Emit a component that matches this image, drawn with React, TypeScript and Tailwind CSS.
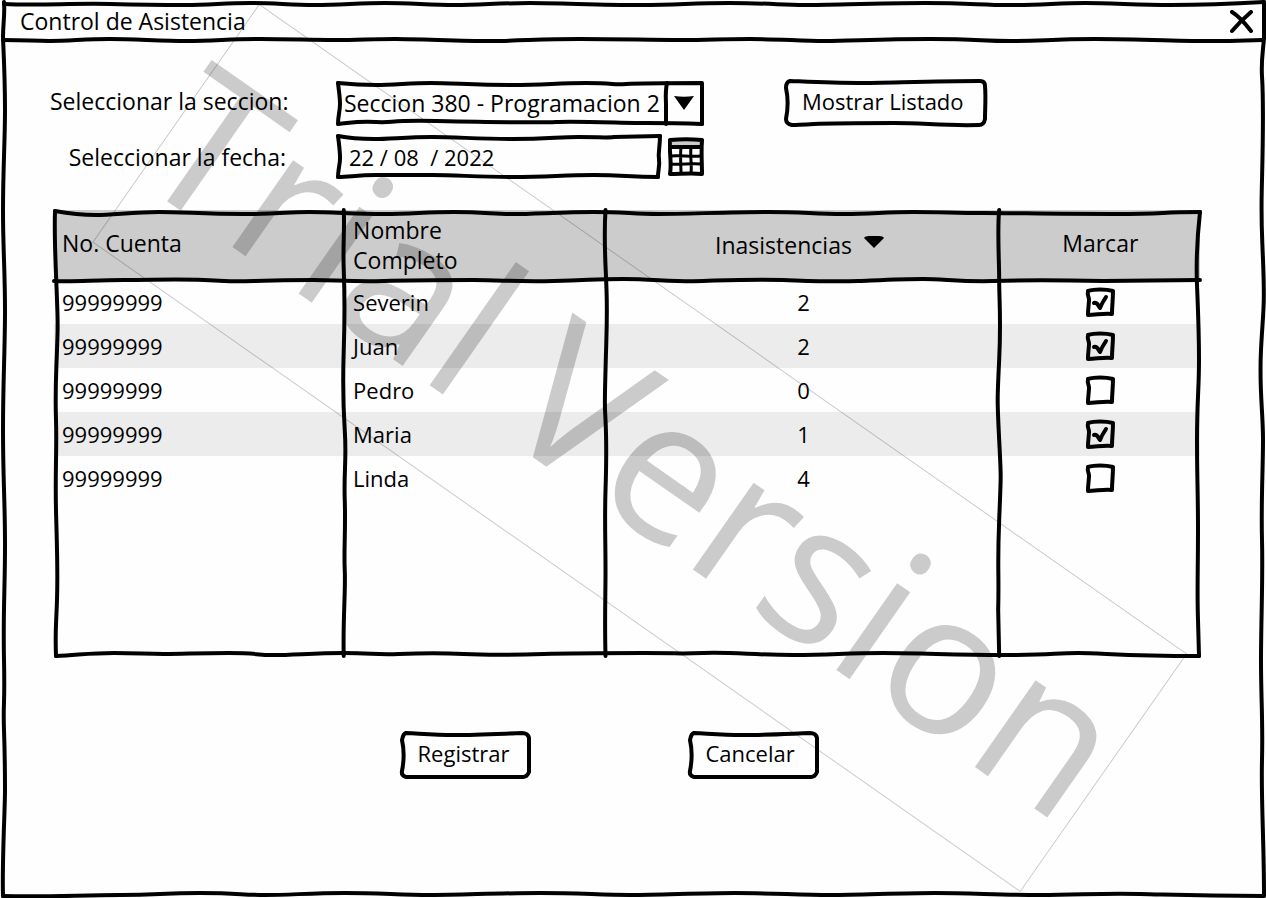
import { useState, type ReactNode } from "react";

const students = [
  { account: "99999999", name: "Severin", absences: 2, marked: true },
  { account: "99999999", name: "Juan", absences: 2, marked: true },
  { account: "99999999", name: "Pedro", absences: 0, marked: false },
  { account: "99999999", name: "Maria", absences: 1, marked: true },
  { account: "99999999", name: "Linda", absences: 4, marked: false },
];

/** Hand-drawn strokes laid over the box that contains them. */
function Sketch({ box, paths, width = 4 }: { box: string; paths: string[]; width?: number }) {
  return (
    <svg
      aria-hidden="true"
      viewBox={box}
      preserveAspectRatio="none"
      className="pointer-events-none absolute inset-0 h-full w-full overflow-visible"
      fill="none"
      stroke="#000"
      strokeWidth={width}
      strokeLinecap="round"
      strokeLinejoin="round"
    >
      {paths.map((d) => (
        <path key={d} d={d} vectorEffect="non-scaling-stroke" />
      ))}
    </svg>
  );
}

const windowPaths = [
  "M4 4C40 6 70 3 110 4S160 5 185 5S225 3 250 3S290 5 315 5S360 3 385 3S430 5 455 5S500 3 530 3S600 5 640 5S690 3 730 3S780 5 805 5S880 3 925 3S980 5 1010 5S1060 3 1085 3S1140 5 1170 5S1230 4 1264 2",
  "M4 2C5 14 3 24 3 38C4 60 5 80 5 110S3 170 3 210S5 270 5 310S3 380 3 430S5 500 5 545S3 610 4 660S3 700 4 730S5 770 5 790S2 860 3 896",
  "M3 896C50 897 80 895 120 895S160 893 200 893S240 895 265 895S310 893 345 893S400 895 430 895S500 893 540 893S600 895 630 895S700 893 735 893S800 895 830 895S900 893 935 893S1000 895 1040 895S1100 893 1140 894S1200 896 1264 896",
  "M1264 2V38C1263 52 1261 60 1262 76S1263 140 1262 180S1261 210 1263 260S1263 310 1261 350S1263 410 1263 440S1261 500 1262 540S1261 620 1261 660S1263 720 1262 760S1264 840 1264 896",
];

const titleLine = [
  "M3 4C30 4 30 5 50 5S85 3 110 3S160 5 187 5S230 3 260 3S310 4 335 4S370 3 395 3S460 5 490 5S540 3 580 3S650 4 680 4S720 3 750 3S800 5 825 5S880 3 930 3S980 5 1012 5S1050 3 1095 3S1180 5 1212 5S1245 4 1263 4",
];

const fieldPaths = [
  "M2 2C12 4 22 5 38 5S70 3 95 3S140 5 175 5S220 3 240 3S270 4 275 3L321 2",
  "M321 2C321 14 319 18 320 25S319 36 319 43",
  "M2 43C14 43 20 41 40 41S70 41 95 41S140 43 175 43S225 41 255 41S290 43 319 43",
  "M2 2C3 10 4 17 4 24S2 35 2 43",
];

const tablePaths = [
  "M1 1C12 3 25 5 42 5S80 2 105 2S150 4 190 4S230 2 255 2S300 4 330 4S370 2 400 2S440 4 460 4S510 2 540 2S580 4 605 4S680 2 715 2S760 4 790 4S830 2 860 2S900 3 930 3S1000 4 1060 4S1100 2 1147 2",
  "M0 71C20 72 40 70 70 70S120 69 150 70S170 72 200 71S240 70 260 70S300 72 330 71S390 70 420 70S460 72 500 71S540 69 570 69S620 72 650 71S700 69 730 70S780 72 805 71S850 69 870 69S910 72 940 71S1000 70 1050 71L1147 70",
  "M1 1C0 30 2 60 3 90S4 110 3 140S1 180 2 210S1 260 2 300S4 360 3 390S1 420 2 446",
  "M1147 2C1145 20 1143 50 1144 75S1146 120 1146 150S1144 190 1144 230S1145 280 1145 320S1144 380 1145 410L1146 446",
  "M2 446C25 445 35 443 60 443S90 444 110 444S145 443 175 443S200 445 220 445S260 443 290 443S320 445 345 444S390 443 410 444S460 445 490 444S550 443 590 443S620 444 650 443S700 445 740 445S790 443 830 443S900 445 950 445S1000 443 1025 443S1070 446 1146 446",
  "M290 0C291 20 289 35 290 60S291 110 290 140S289 190 291 220S290 260 291 290S290 340 291 360S289 410 290 446",
  "M552 0C550 30 552 50 553 80S553 120 552 160S551 190 552 210S553 250 552 280S552 330 552 360S551 410 552 446",
  "M946 0C944 20 946 50 946 70S948 110 946 150S944 190 946 230S948 260 946 310S946 360 945 400L946 446",
];

const checkboxPaths = [
  "M2 3C8 1 20 1 27 3C27 12 26 17 26 26C18 25 10 27 2 27C2 20 3 16 3 12S1 8 2 3Z",
];

function SketchButton({ children, wide = false }: { children: ReactNode; wide?: boolean }) {
  return wide ? (
    <button type="button" className="relative h-12 w-[203px] pb-1 pl-[18px] text-left">
      <Sketch
        box="0 0 203 48"
        paths={[
          "M6 2C30 3 50 4 75 4S150 2 196 2Q201 2 201 7C202 18 201 30 201 40Q200 46 195 46C160 47 140 44 110 44S50 44 30 45S14 46 8 46Q2 45 2 40C4 30 4 18 2 9Q2 3 6 2Z",
        ]}
      />
      {children}
    </button>
  ) : (
    <button type="button" className="relative h-12 w-[131px] pb-1 pl-[18px] text-left">
      <Sketch
        box="0 0 131 48"
        paths={[
          "M6 2C25 3 35 4 55 4S95 3 122 2Q128 2 129 7V41Q127 46 123 46H6Q1 45 2 40C4 30 4 18 2 9Q3 3 6 2Z",
        ]}
      />
      {children}
    </button>
  );
}

function Watermark() {
  return (
    <svg
      viewBox="0 0 1266 898"
      className="pointer-events-none absolute inset-0 h-full w-full"
      fillOpacity="0.2"
    >
      <g transform="rotate(35)">
        <rect x="215" y="-145" width="1132" height="290" fill="none" stroke="#000" strokeOpacity="0.2" />
        <text y="69" fontSize="198">
          <tspan x="206">Trial</tspan>
          <tspan x="648">Version</tspan>
        </text>
      </g>
    </svg>
  );
}

export default function App() {
  const [rows, setRows] = useState(students);
  const toggle = (index: number) =>
    setRows(rows.map((row, i) => (i === index ? { ...row, marked: !row.marked } : row)));

  return (
    <main className="relative flex min-h-screen flex-col bg-[#fefefe] font-['Open_Sans','Noto_Sans',sans-serif] text-[22px] leading-[30px] text-black">
      <Sketch box="0 0 1266 898" paths={windowPaths} />

      <header className="relative flex h-11 items-center justify-between pr-3 pl-5">
        <h1 className="pb-0.5 text-[23px]">Control de Asistencia</h1>
        <button type="button" aria-label="Cerrar" className="size-6">
          <svg viewBox="0 0 24 24" className="size-6" fill="none" stroke="#000" strokeWidth="4" strokeLinecap="round">
            <path d="M2 2C7 5 14 12 21 21M21 2C14 8 8 14 2 21" />
          </svg>
        </button>
        <div className="absolute inset-x-0 bottom-0 h-2">
          <Sketch box="0 0 1266 8" paths={titleLine} />
        </div>
      </header>

      <form className="mt-[35px] flex items-start gap-20 pl-[50px]">
        <div className="grid grid-cols-[238px_368px] items-center gap-x-12 gap-y-2 pt-px">
          <label htmlFor="section" className="pb-1 text-right text-[23px] whitespace-nowrap">
            Seleccionar la seccion:
          </label>
          <div className="relative h-[46px]">
            <select id="section" className="h-full w-full appearance-none bg-transparent pl-2 text-[23px]">
              <option>Seccion 380 - Programacion 2</option>
            </select>
            <Sketch
              box="0 0 368 46"
              paths={[
                "M2 3C12 4 22 5 40 5S75 3 95 3S140 5 175 5S220 3 250 3S275 5 290 4S330 3 366 3V44",
                "M366 44C340 43 330 43 310 43S240 41 220 42S150 42 100 41S60 43 40 42S14 43 2 44C2 36 4 31 4 24S3 12 2 3",
                "M331 3C329 12 330 20 330 24V44",
              ]}
            />
            <svg aria-hidden="true" viewBox="0 0 20 14" className="pointer-events-none absolute top-4 right-[10px] h-[14px] w-5">
              <path d="M0 0C7 1 13 1 20 0L10 14Z" />
            </svg>
          </div>

          <label htmlFor="date" className="pr-0.5 text-right text-[23px] whitespace-nowrap">
            Seleccionar la fecha:
          </label>
          <div className="flex items-center justify-between">
            <div className="relative h-[46px] w-[326px]">
              <input
                id="date"
                type="text"
                defaultValue="22 / 08  / 2022"
                className="h-full w-full bg-transparent px-[13px] outline-none"
              />
              <Sketch box="0 0 323 46" paths={fieldPaths} />
            </div>
            <button type="button" aria-label="Abrir calendario" className="h-10 w-9">
              <svg viewBox="0 0 36 40" className="h-10 w-9" fill="none" stroke="#000">
                <path d="M2 3H34V10H2Z" fill="#ccc" stroke="none" />
                <path d="M2 3C12 2 24 2 34 3C33 15 34 27 34 37C24 36 12 37 2 37C4 27 1 14 2 3Z" strokeWidth="4" strokeLinejoin="round" />
                <path d="M2 10H34" strokeWidth="4" />
                <path d="M13 10C12 20 13 28 13 36M23 10C22 20 24 28 23 36M3 19C12 18 22 20 33 19M3 27C12 28 22 26 33 27" strokeWidth="3" />
              </svg>
            </button>
          </div>
        </div>
        <SketchButton wide>Mostrar Listado</SketchButton>
      </form>

      <div className="relative mt-[30px] mr-[66px] ml-[54px]">
        <table className="w-full table-fixed border-collapse">
          <colgroup>
            <col className="w-[25.4%]" />
            <col className="w-[22.8%]" />
            <col className="w-[34.4%]" />
            <col className="w-[17.4%]" />
          </colgroup>
          <thead>
            <tr className="h-[70px] bg-[#ccc] text-left text-[23px]">
              <th className="pb-1 pl-2 font-normal">No. Cuenta</th>
              <th className="pr-20 pl-2 font-normal">Nombre Completo</th>
              <th className="font-normal">
                <span className="flex items-center justify-center gap-3 pr-2">
                  Inasistencias
                  <svg aria-hidden="true" viewBox="0 0 20 12" className="mb-1.5 h-3 w-5">
                    <path d="M0 2Q1 0 5 0H15Q19 0 20 2L10 12Z" />
                  </svg>
                </span>
              </th>
              <th className="pb-1 text-center font-normal">Marcar</th>
            </tr>
          </thead>
          <tbody>
            {rows.map((row, i) => (
              <tr key={row.name} className="h-11 even:bg-[#ececec]">
                <td className="pl-2">{row.account}</td>
                <td className="pl-2">{row.name}</td>
                <td className="text-center">{row.absences}</td>
                <td>
                  <div className="relative mx-auto size-7">
                    <input
                      type="checkbox"
                      aria-label={`Marcar ${row.name}`}
                      checked={row.marked}
                      onChange={() => toggle(i)}
                      className="block size-7 appearance-none"
                    />
                    <Sketch box="0 0 28 28" paths={checkboxPaths} />
                    {row.marked && <Sketch box="0 0 28 28" paths={["M8 15C11 14 12 17 14 20C16 15 18 12 20 9"]} />}
                  </div>
                </td>
              </tr>
            ))}
          </tbody>
        </table>
        <div className="h-[156px]" />
        <Sketch box="0 0 1147 446" paths={tablePaths} />
      </div>

      <footer className="mt-[75px] mb-16 flex justify-center gap-[157px] pr-12">
        <SketchButton>Registrar</SketchButton>
        <SketchButton>Cancelar</SketchButton>
      </footer>

      <Watermark />
    </main>
  );
}
